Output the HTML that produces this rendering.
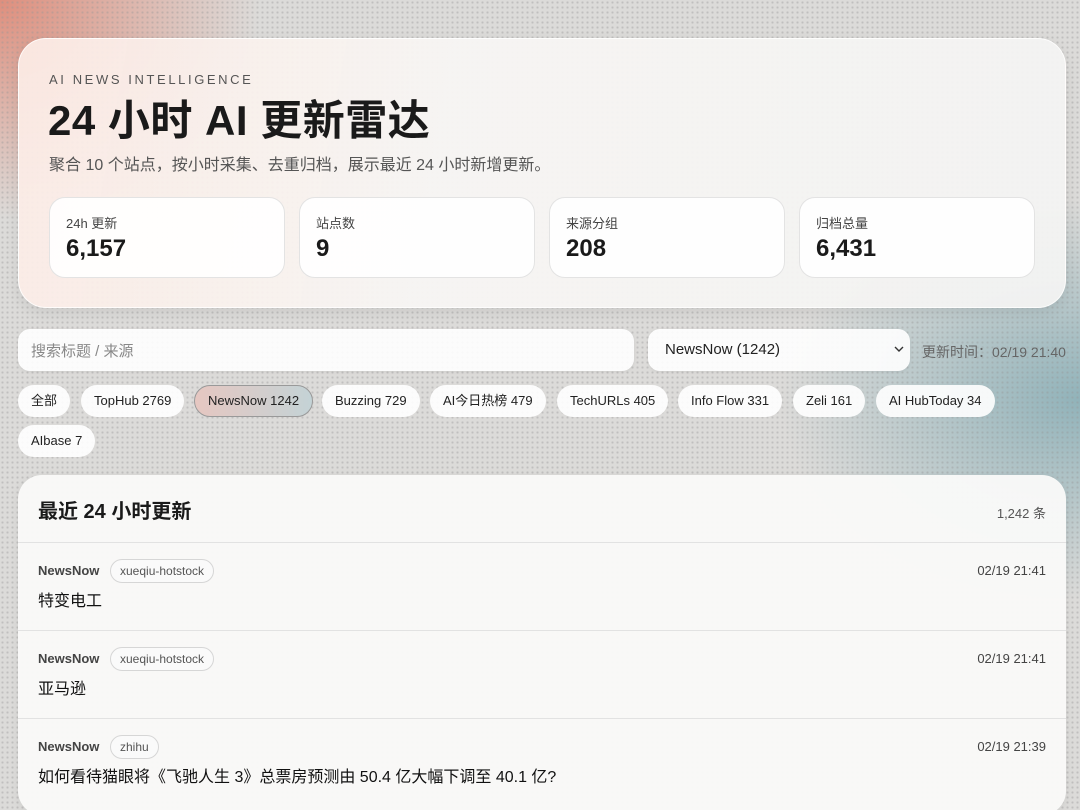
<!DOCTYPE html>
<html><head><meta charset="utf-8"><style>
*{box-sizing:border-box;margin:0;padding:0}
html,body{width:1080px;height:810px;overflow:hidden}
body{font-family:"Liberation Sans","Noto Sans CJK SC",sans-serif;color:#1a1a1a;position:relative;background:#dedcda;}
.bg{position:absolute;inset:0;background:
radial-gradient(ellipse 260px 220px at 0px 0px,rgba(222,130,110,.85),rgba(222,130,110,0) 100%),
radial-gradient(ellipse 300px 200px at 1080px 400px,rgba(120,165,175,.75),rgba(120,165,175,0) 100%),
#dcdbd9;}
.dots{position:absolute;inset:0;background-image:radial-gradient(rgba(150,150,150,.4) 1px,transparent 1.2px);background-size:5px 5px}
.hero{position:absolute;left:18px;top:38px;width:1048px;height:270px;border-radius:28px;background:linear-gradient(100deg,rgba(252,236,230,.92),rgba(248,246,244,.93) 40%,rgba(244,244,243,.93));box-shadow:0 4px 14px rgba(0,0,0,.08);border:1px solid rgba(255,255,255,.8)}
.eyebrow{position:absolute;left:30px;top:33px;font-size:13px;letter-spacing:2.6px;color:#555}
h1{position:absolute;left:29px;top:56px;font-size:42px;line-height:52px;font-weight:700;letter-spacing:.5px}
.sub{position:absolute;left:30px;top:116px;font-size:16px;line-height:22px;color:#555}
.stat{position:absolute;top:158px;width:236px;height:81px;background:rgba(255,255,255,.9);border:1px solid #e3e3e3;border-radius:16px}
.stat .l{position:absolute;left:16px;top:15px;font-size:13px;color:#444}
.stat .v{position:absolute;left:16px;top:37px;font-size:24px;font-weight:700}
.input{position:absolute;top:329px;height:42px;background:rgba(255,255,255,.9);border-radius:12px;box-shadow:0 1px 3px rgba(0,0,0,.06);font-size:15px}
.chip{position:absolute;height:32px;line-height:32px;padding:0 13px;border-radius:16px;background:rgba(255,255,255,.9);font-size:13px;color:#222}
.list{position:absolute;left:18px;top:475px;width:1048px;height:340px;border-radius:24px;background:rgba(250,250,249,.95);box-shadow:0 2px 10px rgba(0,0,0,.06)}
.list h2{position:absolute;left:20px;top:20px;font-size:20px;font-weight:700}
.cnt{position:absolute;right:20px;top:28px;font-size:13px;color:#555}
.item{position:absolute;left:0;width:1048px;height:88px;border-top:1px solid #e2e2e2}
.src{position:absolute;left:20px;top:20px;font-size:13px;font-weight:700;color:#444}
.tag{position:absolute;left:92px;top:16px;height:24px;line-height:22px;padding:0 9px;border:1px solid #d6d6d6;border-radius:12px;font-size:12px;color:#555;background:#fafafa}
.time{position:absolute;right:20px;top:20px;font-size:13px;color:#444}
.title{position:absolute;left:20px;top:48px;font-size:16px;line-height:22px;color:#111}
</style></head><body>
<div class="bg"></div><div class="dots"></div>
<div class="hero">
<div class="eyebrow">AI NEWS INTELLIGENCE</div>
<h1>24 小时 AI 更新雷达</h1>
<div class="sub">聚合 10 个站点，按小时采集、去重归档，展示最近 24 小时新增更新。</div>
<div class="stat" style="left:30px"><div class="l">24h 更新</div><div class="v">6,157</div></div>
<div class="stat" style="left:280px"><div class="l">站点数</div><div class="v">9</div></div>
<div class="stat" style="left:530px"><div class="l">来源分组</div><div class="v">208</div></div>
<div class="stat" style="left:780px"><div class="l">归档总量</div><div class="v">6,431</div></div>
</div>
<div class="input" style="left:18px;width:616px;"><span style="position:absolute;left:13px;top:11px;color:#888">搜索标题 / 来源</span></div>
<div class="input" style="left:648px;width:262px;"><span style="position:absolute;left:17px;top:12px;color:#222">NewsNow (1242)</span><svg style="position:absolute;right:6px;top:17px" width="10" height="7" viewBox="0 0 10 7"><path d="M1 1l4 4 4-4" fill="none" stroke="#333" stroke-width="1.4"/></svg></div>
<div style="position:absolute;left:922px;top:342px;font-size:14px;color:#666">更新时间：02/19 21:40</div>
<div class="chip" style="left:18px;top:385px">全部</div>
<div class="chip" style="left:81px;top:385px">TopHub 2769</div>
<div class="chip" style="left:194px;top:385px;background:linear-gradient(90deg,#e6c7c1,#c4d3d6);border:1px solid #999;line-height:30px">NewsNow 1242</div>
<div class="chip" style="left:322px;top:385px">Buzzing 729</div>
<div class="chip" style="left:430px;top:385px">AI今日热榜 479</div>
<div class="chip" style="left:557px;top:385px">TechURLs 405</div>
<div class="chip" style="left:678px;top:385px">Info Flow 331</div>
<div class="chip" style="left:793px;top:385px">Zeli 161</div>
<div class="chip" style="left:876px;top:385px">AI HubToday 34</div>
<div class="chip" style="left:18px;top:425px">AIbase 7</div>
<div class="list">
<h2>最近 24 小时更新</h2><div class="cnt">1,242 条</div>
<div class="item" style="top:67px"><div class="src">NewsNow</div><div class="tag">xueqiu-hotstock</div><div class="time">02/19 21:41</div><div class="title">特变电工</div></div>
<div class="item" style="top:155px"><div class="src">NewsNow</div><div class="tag">xueqiu-hotstock</div><div class="time">02/19 21:41</div><div class="title">亚马逊</div></div>
<div class="item" style="top:243px"><div class="src">NewsNow</div><div class="tag">zhihu</div><div class="time">02/19 21:39</div><div class="title">如何看待猫眼将《飞驰人生 3》总票房预测由 50.4 亿大幅下调至 40.1 亿?</div></div>
</div>
</body></html>
